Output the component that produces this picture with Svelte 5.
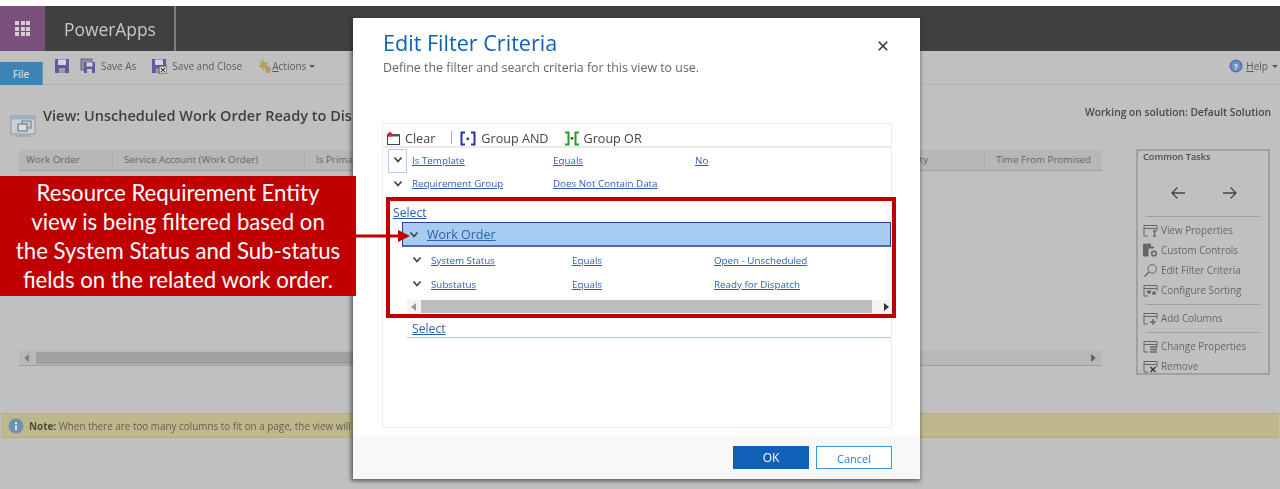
<script>
  const columns = [
    { label: 'Work Order', width: 94, pad: 7 },
    { label: 'Service Account (Work Order)', width: 192, pad: 11 },
    { label: 'Is Primary', width: 579, pad: 11 },
    { label: 'Priority', width: 101, pad: 11 },
    { label: 'Time From Promised', width: 117, pad: 11 }
  ];
  const tasks = [
    [{ label: 'View Properties', icon: 'view' }, { label: 'Custom Controls', icon: 'custom' }, { label: 'Edit Filter Criteria', icon: 'search' }, { label: 'Configure Sorting', icon: 'sort' }],
    [{ label: 'Add Columns', icon: 'add' }],
    [{ label: 'Change Properties', icon: 'change' }, { label: 'Remove', icon: 'remove' }]
  ];
</script>

{#snippet chevron()}
  <svg class="chev" width="10" height="8" viewBox="0 0 10 8"><path d="M1.500 1.500 5 5.500l3.500-4" fill="none" stroke="#444" stroke-width="1.800"/></svg>
{/snippet}

{#snippet floppy(x)}
  <svg width="16" height="16" viewBox="0 0 16 16">
    <rect x="1" y="1" width="14" height="14" fill="#5c5f9c"/>
    <rect x="4" y="1.500" width="8" height="5.500" fill="#d5d5dc"/>
    <rect x="5" y="10" width="6" height="5" fill="#9a9ab8"/>
    {#if x}<rect x="8" y="8" width="8" height="8" fill="#c8c8c8" stroke="#555"/><path d="m10 10 4 4m0-4-4 4" stroke="#333"/>{/if}
  </svg>
{/snippet}

{#snippet taskIcon(icon)}
  <svg class="task-icon" width="15" height="15" viewBox="0 0 15 15" fill="none" stroke="#666">
    {#if icon === 'search'}
      <circle cx="9.200" cy="5.800" r="4.300"/><path d="M6 9 1.500 13.500" stroke-width="1.400"/>
    {:else if icon === 'custom'}
      <path d="M.5 1h3v3h1V1h3v3h3v1H5v8H.5z" fill="#666"/><circle cx="11" cy="10.500" r="2.300" stroke-width="1.600"/>
    {:else}
      <path d="M1 13V2.500h13V8M1 5.500h13M1 13h4"/>
      {#if icon === 'view'}<path d="M10 8h3M11.500 8v5M10 13h3" stroke-width="1.300"/>{/if}
      {#if icon === 'sort'}<path d="M4 8h4L6 11zM9 11h4l-2-3z" fill="#666"/>{/if}
      {#if icon === 'add'}<path d="M10 8v6M7 11h6" stroke-width="1.300"/>{/if}
      {#if icon === 'change'}<path d="M7 8h7M7 10.500h7M7 13h7" stroke-width="1.300"/>{/if}
      {#if icon === 'remove'}<path d="m7.500 8 5 5m0-5-5 5" stroke="#444" stroke-width="1.700"/>{/if}
    {/if}
  </svg>
{/snippet}

<div class="page">
  <header class="shell soft">
    <div class="waffle">
      <div class="waffle-grid">
        {#each Array(9) as _}<i></i>{/each}
      </div>
    </div>
    <div class="brand">PowerApps</div>
  </header>

  <div class="ribbon soft">
    <div class="file">File</div>
    <div class="tool save">{@render floppy(false)}</div>
    <div class="tool saveas">
      <svg width="16" height="16" viewBox="0 0 16 16"><rect x="1" y="1" width="11" height="11" fill="#8d8fb0" stroke="#666"/><rect x="4" y="4" width="11" height="11" fill="#5c5f9c"/><rect x="6.500" y="4.500" width="6" height="4" fill="#d5d5dc"/><rect x="7" y="11" width="5" height="4" fill="#c5c5d0"/></svg>
      <span>Save As</span>
    </div>
    <div class="tool saveclose">{@render floppy(true)}<span>Save and Close</span></div>
    <div class="tool actions">
      <svg width="16" height="16" viewBox="0 0 16 16"><path d="m6 1 1.500 3.500L11 4 9.500 7 12 9l-4 .5L6.500 13 5 9.500 1 9l3-3-1.500-3.500L5 4z" fill="#b8a050"/><path d="M8 8.500h5l1 3-1.500 3.500H9z" fill="#b09a70"/></svg>
      <span><u>A</u>ctions</span><b class="caret"></b>
    </div>
    <div class="tool help">
      <svg width="14" height="14" viewBox="0 0 14 14"><circle cx="7" cy="7" r="6.500" fill="#4d76ae"/><circle cx="7" cy="7" r="4.800" fill="#6f90c4"/><text x="7" y="10.500" text-anchor="middle" class="qmark">?</text></svg>
      <span><u>H</u>elp</span><b class="caret"></b>
    </div>
  </div>

  <div class="titlebar soft">
    <svg class="view-icon" width="28" height="26" viewBox="0 0 28 26">
      <rect x="2" y="3" width="24" height="18" fill="#ccd0d4" stroke="#8e98a4"/>
      <rect x="2" y="3" width="24" height="3.500" fill="#9fb0c0"/>
      <rect x="13" y="8" width="9" height="7" fill="#c8ccd0" stroke="#6a7a92"/>
      <rect x="9" y="11" width="9" height="7" fill="#dcdcdc" stroke="#5c6a86"/>
      <path d="M6 23h16" stroke="#999"/>
    </svg>
    <h1>View: Unscheduled Work Order Ready to Dispatch</h1>
    <div class="solution">Working on solution: Default Solution</div>
  </div>

  <div class="content soft">
    <div class="grid-area">
      <div class="thead">
        {#each columns as c}
          <div class="th" style="width:{c.width}px;padding-left:{c.pad}px">{c.label}</div>
        {/each}
      </div>
      <div class="hscroll">
        <svg width="6" height="8" viewBox="0 0 6 8"><path d="M5 0v8L0 4z" fill="#808080"/></svg>
        <div class="thumb"></div>
        <svg class="end" width="6" height="8" viewBox="0 0 6 8"><path d="M1 0v8l5-4z" fill="#666"/></svg>
      </div>
    </div>
    <aside class="tasks">
      <h2>Common Tasks</h2>
      <div class="arrows">
        <svg width="16" height="14" viewBox="0 0 16 14"><path d="M15 7H2M7.500 1.500 2 7l5.500 5.500" fill="none" stroke="#444" stroke-width="1.300"/></svg>
        <svg width="16" height="14" viewBox="0 0 16 14"><path d="M1 7h13M8.500 1.500 14 7l-5.500 5.500" fill="none" stroke="#444" stroke-width="1.300"/></svg>
      </div>
      {#each tasks as group}
        <ul>
          {#each group as t}
            <li>{@render taskIcon(t.icon)}<span>{t.label}</span></li>
          {/each}
        </ul>
      {/each}
    </aside>
  </div>

  <div class="note soft">
    <svg width="16" height="16" viewBox="0 0 16 16"><circle cx="8" cy="8" r="7.500" fill="#6c8fb4"/><rect x="7" y="7" width="2" height="5" fill="#dfe3e0"/><rect x="7" y="4" width="2" height="2" fill="#dfe3e0"/></svg>
    <p><b>Note:</b> When there are too many columns to fit on a page, the view will</p>
  </div>

  <section class="dialog">
    <div class="dlg-body soft">
      <div class="dlg-head">
        <div>
          <h3>Edit Filter Criteria</h3>
          <p>Define the filter and search criteria for this view to use.</p>
        </div>
        <svg class="close" width="10" height="10" viewBox="0 0 10 10"><path d="m.8.800 8.400 8.400m0-8.400L.8 9.200" stroke="#333" stroke-width="1.600"/></svg>
      </div>

      <div class="filter">
        <div class="filter-bar">
          <span class="fb clear">
            <svg width="15" height="15" viewBox="0 0 15 15"><rect x="1.500" y="3.500" width="12" height="10" fill="#fff" stroke="#444"/><rect x="1" y="3" width="13" height="2.500" fill="#555"/><path d="M1 3.500 4 0.500l3 3-1.500 0v2h-3v-2z" fill="#d22"/></svg>
            Clear
          </span>
          <span class="sep"></span>
          <span class="fb and">
            <svg width="16" height="16" viewBox="0 0 16 16"><path d="M5 1.500H1.500v12H5M11 1.500h3.500v12H11" fill="none" stroke="#2b2fae" stroke-width="2"/><rect x="6.500" y="6.500" width="2.500" height="2.500" fill="#444"/></svg>
            Group AND
          </span>
          <span class="fb or">
            <svg width="16" height="16" viewBox="0 0 16 16"><path d="M1 1.500h3.500v12H1M15 1.500h-3.500v12H15" fill="none" stroke="#25a025" stroke-width="2"/><rect x="6.800" y="6" width="2.500" height="2.500" fill="#444"/></svg>
            Group OR
          </span>
        </div>

        <div class="row"><span class="chev-box focus">{@render chevron()}</span><a class="c1">Is Template</a><a class="c2">Equals</a><a>No</a></div>
        <div class="row second"><span class="chev-box">{@render chevron()}</span><a class="c1">Requirement Group</a><a class="c2">Does Not Contain Data</a></div>

        <a class="select s1">Select</a>
        <div class="group-head">{@render chevron()}<a>Work Order</a></div>
        <div class="subrows">
          <div class="row"><span class="chev-box">{@render chevron()}</span><a class="c1">System Status</a><a class="c2">Equals</a><a>Open - Unscheduled</a></div>
          <div class="row"><span class="chev-box">{@render chevron()}</span><a class="c1">Substatus</a><a class="c2">Equals</a><a>Ready for Dispatch</a></div>
        </div>
        <div class="inner-scroll">
          <svg width="5" height="8" viewBox="0 0 5 8"><path d="M5 0v8L0 4z" fill="#999"/></svg>
          <div class="inner-thumb"></div>
          <svg width="5" height="8" viewBox="0 0 5 8"><path d="M0 0v8l5-4z" fill="#333"/></svg>
        </div>
        <div class="select-row"><a class="select">Select</a></div>
      </div>
    </div>
    <footer class="soft">
      <button class="ok">OK</button>
      <button class="cancel">Cancel</button>
    </footer>
    <div class="highlight"></div>
  </section>

  <div class="callout">
    Resource Requirement Entity<br />view is being filtered based on<br />the System Status and Sub-status<br />fields on the related work order.
  </div>
  <svg class="pointer" width="56" height="14" viewBox="0 0 56 14"><path d="M0 5.500h42V1l12 6-12 6V8.500H0z" fill="#c00000"/></svg>
</div>

<style>
  :global(body) { margin: 0; }
  .page {
    position: relative;
    width: 1280px;
    height: 489px;
    overflow: hidden;
    background: #c0c0c0;
    box-sizing: border-box;
    padding-top: 6px;
    font-family: "Open Sans", "Liberation Sans", sans-serif;
    color: #5c5c5c;
    display: flex;
    flex-direction: column;
  }
  .page::before {
    content: "";
    position: absolute;
    inset: 0 0 auto 0;
    height: 6px;
    background: #fff;
  }
  .soft { filter: blur(0.35px); }
  .shell { height: 45px; background: #404040; display: flex; flex: none; }
  .waffle { width: 45px; background: #7b4f7c; display: flex; align-items: center; justify-content: center; }
  .waffle-grid { display: grid; grid-template-columns: repeat(3, 4px); grid-auto-rows: 4px; gap: 1.500px; }
  .waffle-grid i { background: #d4cdd4; }
  .brand {
    border-right: 2px solid #7d7d7d;
    color: #c8c8c8;
    font-size: 17.400px;
    line-height: 47px;
    padding-left: 19px;
    width: 110px;
  }

  .ribbon { height: 33px; flex: none; position: relative; border-bottom: 1px solid #b2b2b2; display: flex; font-size: 10px; }
  .file {
    position: absolute; left: 0; top: 11px; width: 42px; height: 23px;
    background: #3f82b4; color: #cfd8de; font-size: 10px; font-weight: 600;
    text-align: center; line-height: 25px; border-right: 1px solid #5d98c2;
  }
  .tool { display: flex; align-items: center; gap: 5px; height: 16px; margin-top: 7px; color: #5c5c5c; white-space: nowrap; }
  .tool svg { flex: none; }
  .save { margin-left: 54px; }
  .saveas { margin-left: 10px; }
  .saveclose { margin-left: 15px; }
  .actions { margin-left: 15px; gap: 0; }
  .actions span { margin-left: -1px; }
  .actions .caret { margin-left: 3px; }
  .help { margin-left: auto; margin-right: 2px; gap: 3px; }
  .help .caret { margin-left: 1px; }
  .qmark { font: bold 9px "Open Sans", sans-serif; fill: #dfe5ee; }
  .caret { width: 0; height: 0; border: 3px solid transparent; border-top-color: #555; border-bottom: 0; }

  .titlebar { height: 65px; flex: none; display: flex; position: relative; padding-left: 9px; }
  .view-icon { margin-top: 28px; flex: none; }
  h1 {
    margin: 22px 0 0 6px;
    font-size: 14.500px;
    font-weight: 600;
    color: #3f3f3f;
    white-space: nowrap;
    line-height: 18px;
  }
  .solution {
    position: absolute; right: 9px; top: 20px;
    font-size: 10.300px; font-weight: 600; color: #474747;
  }

  .content { height: 265px; flex: none; display: flex; }
  .grid-area { width: 1083px; margin-left: 19px; }
  .thead { display: flex; height: 20px; background: #b7b7b7; border-bottom: 1px solid #a2a2a2; }
  .th {
    box-sizing: border-box; font-size: 9.800px; line-height: 20px;
    border-right: 1px solid #ababab; white-space: nowrap; color: #666;
  }
  .th:last-child { border-right: 0; }
  .hscroll {
    margin-top: 179px; height: 15px; background: #b8b8b8; border-bottom: 1px solid #a0a0a0;
    display: flex; align-items: center; gap: 6px; padding: 0 6px 0 5px;
  }
  .thumb { flex: none; width: 600px; height: 12px; background: #a0a0a0; }
  .end { margin-left: auto; }

  .tasks {
    width: 130px; height: 222px; margin: -1px 0 0 34px;
    border: 2px solid #a0a0a0;
    color: #666; font-size: 9.900px;
  }
  .tasks h2 { margin: 0 0 0 5px; font-size: 9.200px; font-weight: 600; color: #4d4d4d; line-height: 12px; }
  .arrows { display: flex; gap: 36px; margin: 23px 0 16px 32px; height: 14px; }
  .tasks ul { list-style: none; margin: 0 8px; padding: 3px 0 0; border-top: 1px solid #a0a0a0; }
  .tasks ul + ul { margin-top: 4px; }
  .tasks li { height: 20px; display: flex; align-items: center; margin-left: -3px; gap: 3px; white-space: nowrap; }
  .task-icon { flex: none; }

  .note {
    height: 25px; margin: -2px 1px 0; background: #bfb88c; border-top: 1px solid #b1ab8a; border-bottom: 1px solid #b1ab8a;
    box-sizing: border-box; display: flex; align-items: center; padding-left: 7px; gap: 5px; font-size: 9.900px; color: #626052;
  }
  .note svg { flex: none; }
  .note p { margin: 0; white-space: nowrap; }
  .note b { font-weight: 700; color: #4a4a40; }

  .dialog {
    position: absolute; left: 353px; top: 18px; width: 567px; height: 461px;
    background: #fff; box-shadow: -1px 1px 4px 1px rgba(40, 40, 40, .65);
    display: flex; flex-direction: column; color: #444;
  }
  .dlg-body { flex: 1; padding: 0 29px; display: flex; flex-direction: column; }
  .dlg-head { display: flex; justify-content: space-between; height: 105px; padding-left: 1px; }
  h3 { margin: 10px 0 0; font-weight: 400; font-size: 21.600px; line-height: 30px; color: #1160b7; white-space: nowrap; }
  .dlg-head p { margin: 1px 0 0; font-size: 12.400px; line-height: 17px; color: #666; white-space: nowrap; }
  .close { margin: 23px 3px 0 0; }

  .filter { width: 510px; height: 305px; border: 1px solid #ededed; box-sizing: border-box; font-size: 9.800px; flex: none; }
  .filter-bar {
    height: 22px; padding: 0 0 0 3px; border-bottom: 2px solid #eaeaea; display: flex; align-items: flex-end;
    font-size: 12.600px; color: #444; white-space: nowrap; line-height: 17px;
  }
  .fb { display: inline-flex; align-items: center; gap: 4px; position: relative; top: 1px; }
  .and { gap: 5px; }
  .sep { width: 1px; height: 13px; background: #aaa; margin: 0 8px 2px 16px; }
  .or { margin-left: 15px; }
  a { color: #2d5fb0; text-decoration: underline; }
  .row { display: flex; align-items: center; height: 24px; white-space: nowrap; }
  .row.second { height: 23px; }
  .chev-box { width: 29px; flex: none; display: flex; justify-content: center; padding-left: 1px; box-sizing: border-box; }
  .chev-box.focus { position: relative; }
  .chev-box.focus::before {
    content: ""; position: absolute; left: 5px; top: -7px; width: 19px; height: 24px;
    border: 1px solid #b5cdea; box-sizing: border-box;
  }
  .chev { position: relative; }
  .c1 { width: 141px; flex: none; }
  .c2 { width: 142px; flex: none; }
  .select { display: block; font-size: 12.200px; line-height: 18px; }
  .s1 { margin: 9px 0 0 10px; height: 18px; }
  .group-head {
    margin-left: 19px; width: 489px; height: 25px; box-sizing: border-box;
    background: #a6cdf0; border: 1px solid #2c3c96; border-bottom: 2px solid #5664ac;
    display: flex; align-items: center; padding: 1px 0 0 6px; gap: 8px; font-size: 12.500px;
  }
  .subrows { margin-top: 1px; padding-left: 19px; }
  .inner-scroll {
    margin: 4px 0 0 24px; height: 13px; width: 483px; background: #f3f3f3;
    display: flex; align-items: center; gap: 4px; padding: 0 1px 0 4px; box-sizing: border-box;
  }
  .inner-thumb { flex: 1; height: 13px; background: #bdbdbd; margin: 0 8px 0 1px; }
  .select-row { margin: 7px 0 0 24px; height: 18px; width: 484px; border-bottom: 1px solid #b4c7e0; box-sizing: border-box; padding-left: 5px; }

  footer {
    height: 42px; flex: none; background: #f8f8f8; display: flex; justify-content: flex-end; gap: 7px;
    padding: 9px 28px 0 0; box-sizing: border-box;
  }
  footer button {
    width: 76px; height: 23px; font: 12px/1 "Open Sans", sans-serif; padding: 1px 0 0; border-radius: 0; box-sizing: border-box;
  }
  .ok { background: #1160b7; color: #fff; border: 1px solid #1160b7; }
  .cancel { background: #fff; color: #2d7dd2; border: 1px solid #3c96e6; font-size: 11px; }

  .highlight {
    position: absolute; left: 33px; top: 179px; width: 510px; height: 121px;
    border: 4px solid #c00000; box-sizing: border-box; pointer-events: none;
  }
  .callout {
    position: absolute; left: 0; top: 176px; width: 356px; height: 120px;
    background: #c00000; color: #fff; text-align: center;
    font: 22.200px/29px Lato, "Open Sans", sans-serif; padding-top: 2px; box-sizing: border-box;
  }
  .pointer { position: absolute; left: 356px; top: 229px; }
</style>
